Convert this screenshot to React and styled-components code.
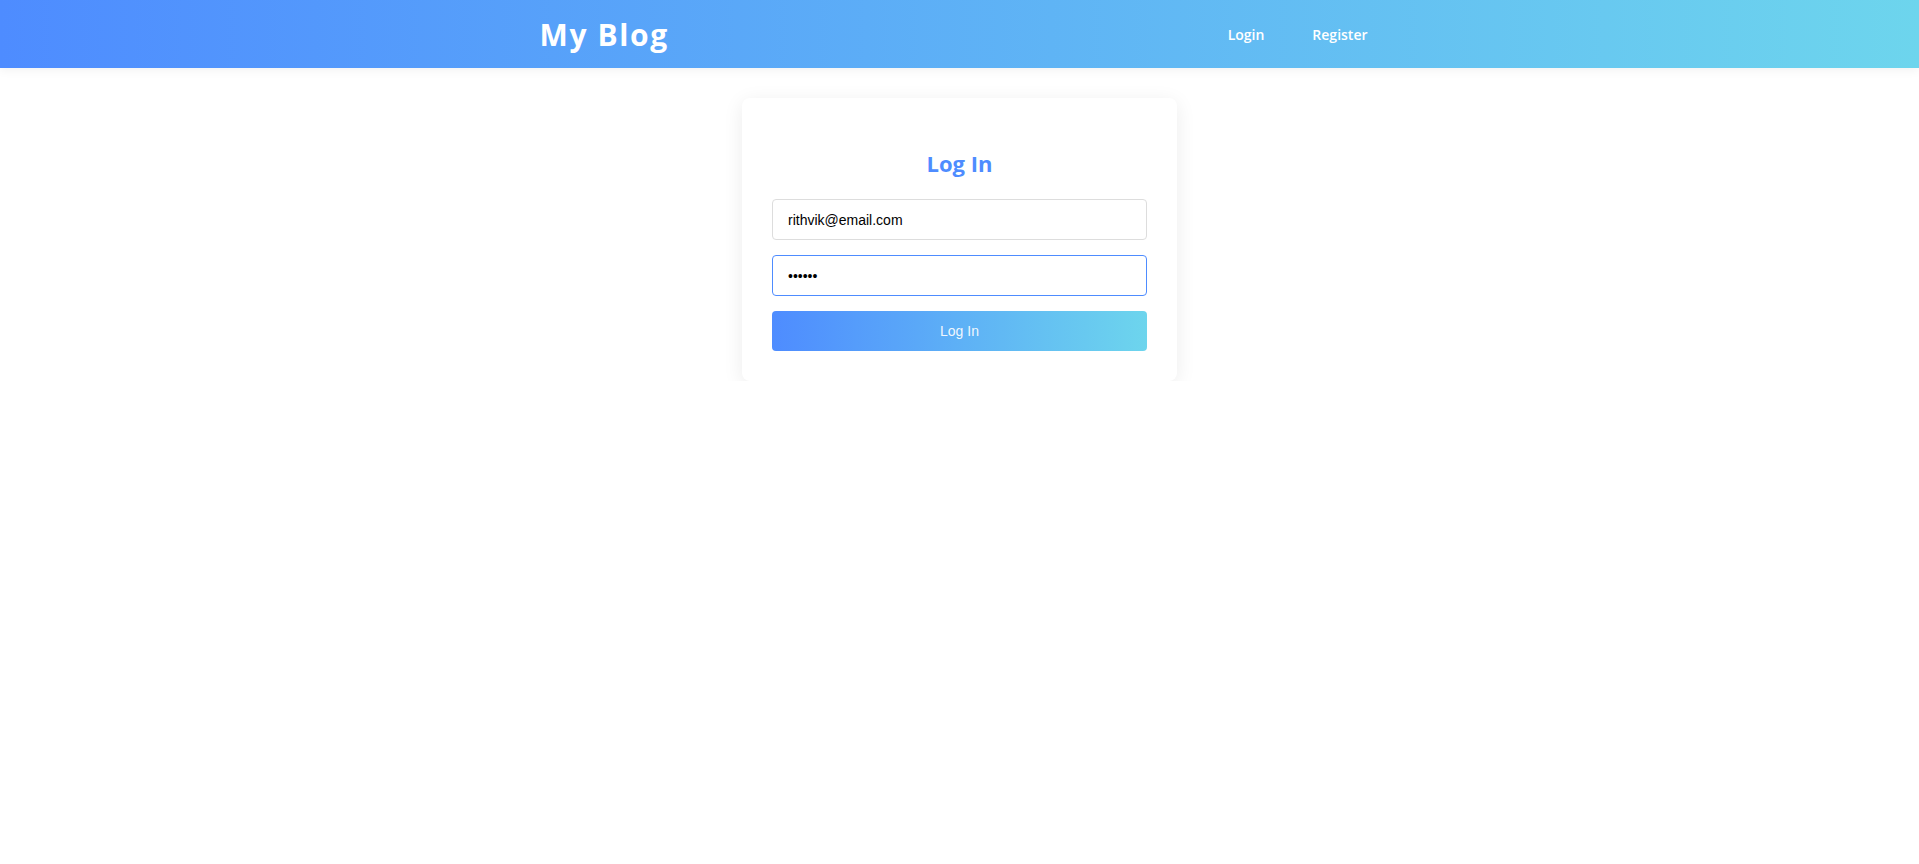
import styled, { createGlobalStyle } from "styled-components";
import { useState } from "react";

const GlobalStyle = createGlobalStyle`
body {
  margin: 0;
  background: #ffffff;
  font-family: "Open Sans", "Noto Sans", sans-serif;
}
* {
  box-sizing: border-box;
}
`

const App = () => {
    const [email, setEmail] = useState("rithvik@email.com");
    const [password, setPassword] = useState("secret");

    return(
        <>
        <GlobalStyle />
        <Header>
            <HeaderInner>
                <Logo href="#">My Blog</Logo>
                <Nav>
                    <NavItem href="#">Login</NavItem>
                    <NavItem href="#">Register</NavItem>
                </Nav>
            </HeaderInner>
        </Header>
        <Main>
            <Card>
                <Title>Log In</Title>
                <Form onSubmit={(e) => e.preventDefault()}>
                    <Input
                        type="email"
                        value={email}
                        onChange={(e) => setEmail(e.target.value)}
                        placeholder="Email"
                    />
                    <Input
                        type="password"
                        value={password}
                        onChange={(e) => setPassword(e.target.value)}
                        placeholder="Password"
                        $active
                        autoFocus
                    />
                    <Button type="submit">Log In</Button>
                </Form>
            </Card>
        </Main>
        </>
    )
};

const Header = styled.header`
height: 68px;
background: linear-gradient(to right, #4e8cff, #6dd5ed);
box-shadow: 0 2px 10px rgba(0, 0, 0, 0.06);
`
const HeaderInner = styled.div`
max-width: 900px;
height: 100%;
margin: 0 auto;
padding: 0 30px;
display: flex;
align-items: center;
justify-content: space-between;
`
const Logo = styled.a`
color: #ffffff;
font-size: 30px;
font-weight: 700;
letter-spacing: 1.6px;
text-decoration: none;
`
const Nav = styled.nav`
display: flex;
gap: 24px;
`
const NavItem = styled.a`
color: #ffffff;
font-size: 14px;
font-weight: 600;
padding: 6px 12px;
text-decoration: none;
`
const Main = styled.main`
display: flex;
justify-content: center;
padding-top: 30px;
`
const Card = styled.div`
width: 435px;
padding: 30px;
background: #ffffff;
border-radius: 8px;
box-shadow: 0 4px 20px rgba(0, 0, 0, 0.08);
`
const Title = styled.h2`
margin: 20px 0 21px;
text-align: center;
color: #4e8cff;
font-size: 22px;
font-weight: 700;
line-height: 30px;
`
const Form = styled.form`
display: flex;
flex-direction: column;
gap: 15px;
`
const Input = styled.input`
height: 41px;
padding: 0 15px;
border: 1px solid ${(p) => (p.$active ? "#4e8cff" : "#dddddd")};
border-radius: 4px;
font-family: "Liberation Sans", Arial, sans-serif;
font-size: 14px;
color: #000000;
outline: none;
`
const Button = styled.button`
height: 40px;
border: none;
border-radius: 4px;
background: linear-gradient(to right, #4e8cff, #6dd5ed);
color: rgba(255, 255, 255, 0.92);
font-family: "Liberation Sans", Arial, sans-serif;
font-size: 14px;
cursor: pointer;
`

export default App;
